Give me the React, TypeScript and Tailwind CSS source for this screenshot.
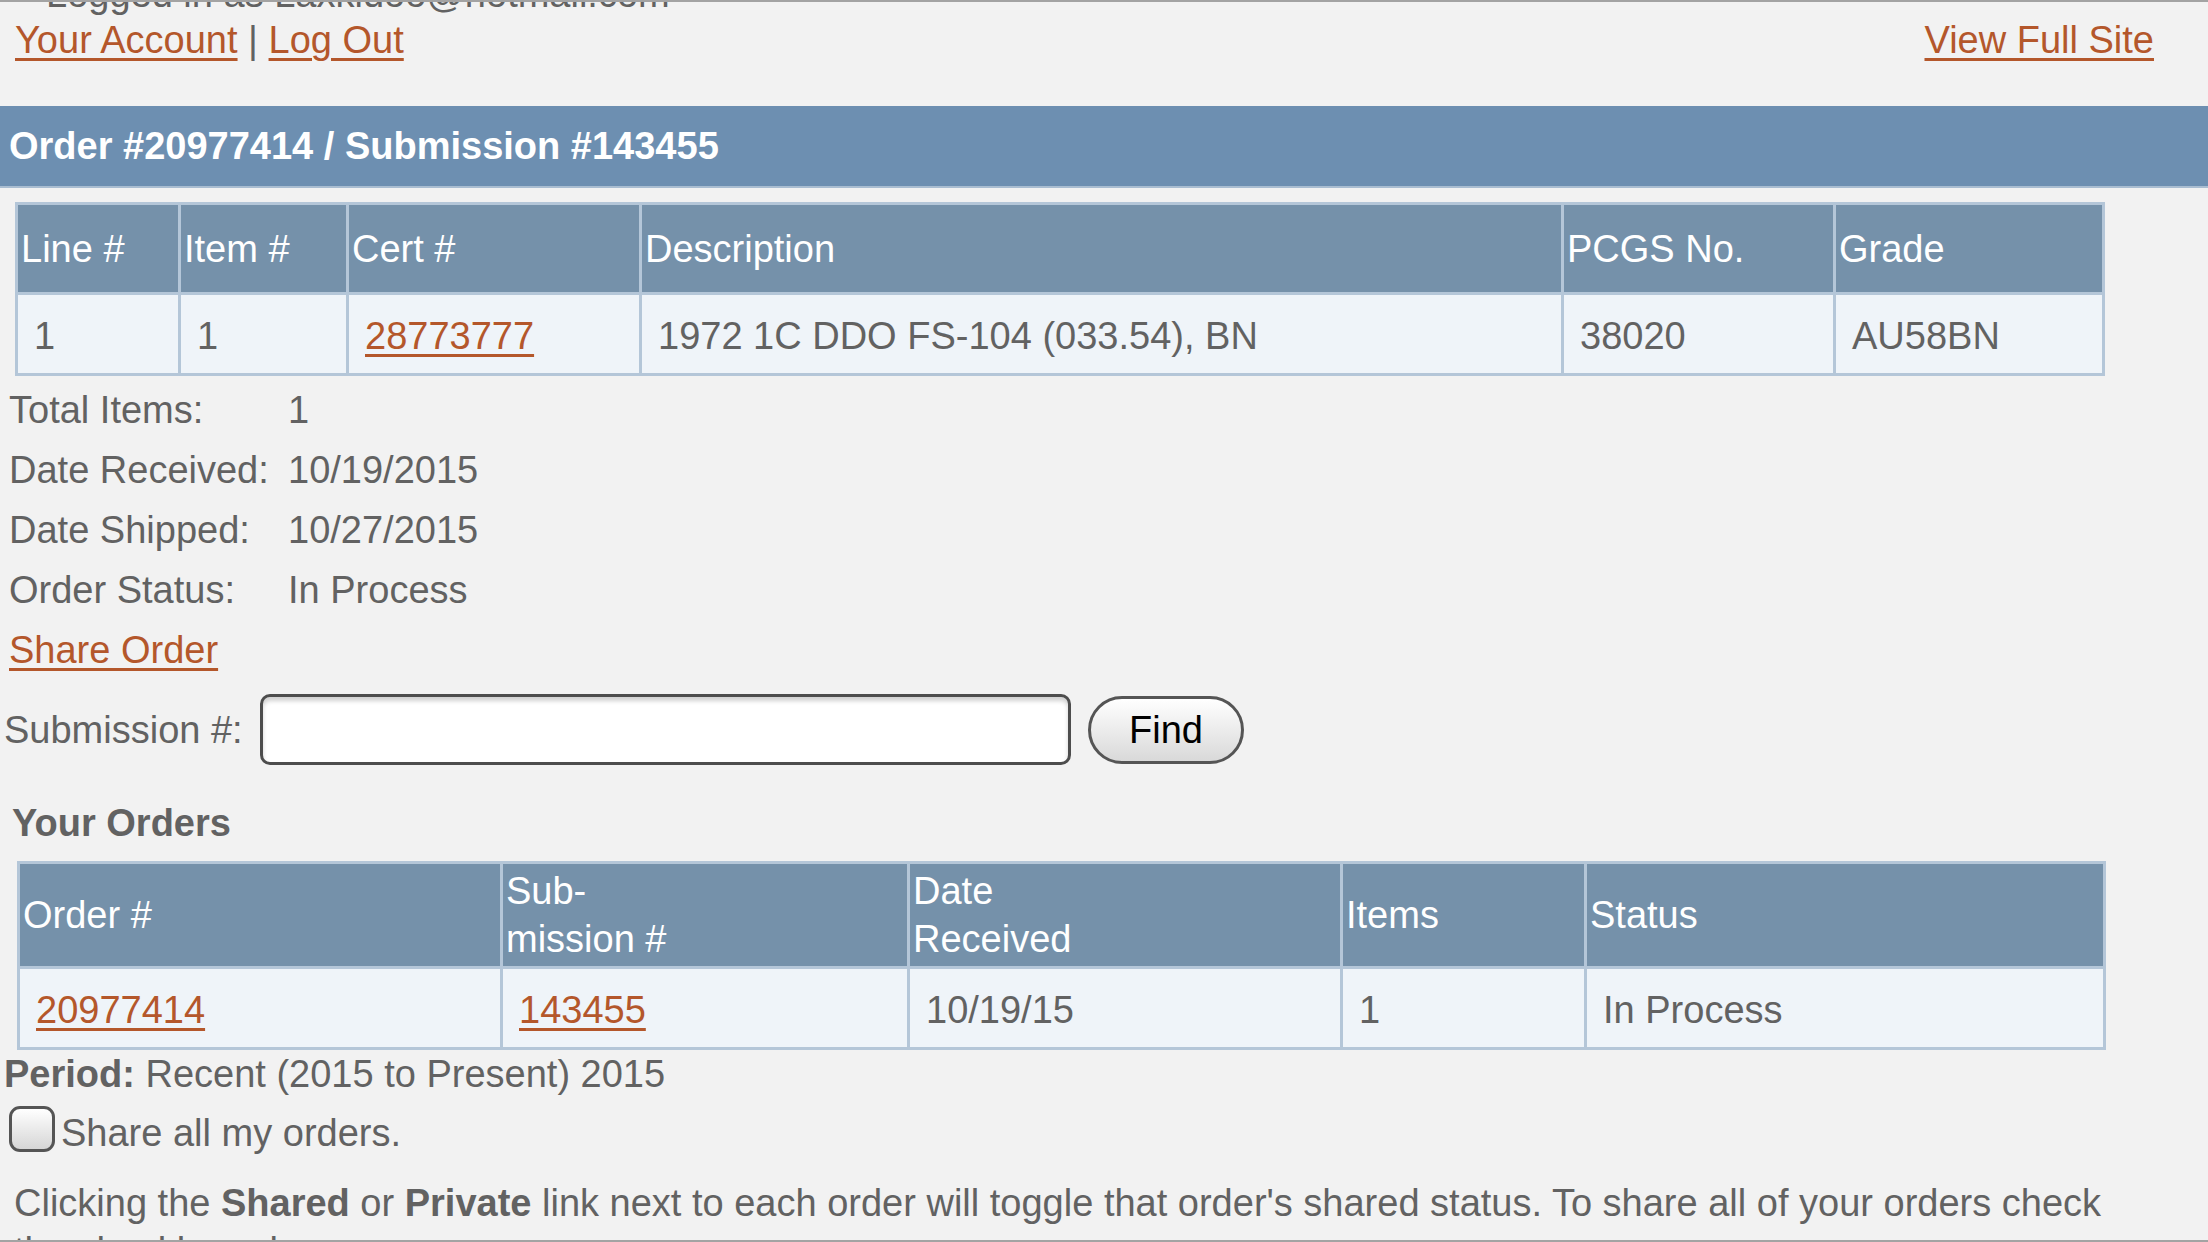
import React from 'react';

const link = 'text-[#b4572b] underline decoration-[3px] underline-offset-[5px]';

const OrderPage: React.FC = () => {
  const lines = [
    { label: 'Total Items:', value: '1' },
    { label: 'Date Received:', value: '10/19/2015' },
    { label: 'Date Shipped:', value: '10/27/2015' },
    { label: 'Order Status:', value: 'In Process' },
  ];

  return (
    <div className="relative h-[1242px] overflow-hidden bg-[#f2f2f2] text-[38px] leading-[44px] text-[#626262] font-['Liberation_Sans',Arial,sans-serif]">
      {/* top / bottom edge lines of the screenshot */}
      <div className="absolute left-0 right-0 top-0 h-[2px] bg-[#a3a3a3]" />
      <div className="absolute left-0 right-0 bottom-0 h-[2px] bg-[#a3a3a3]" />

      <div className="mt-[-28px] pl-[46px] whitespace-nowrap">Logged in as Laxkidoo@hotmail.com</div>

      <div className="mt-[2px] flex justify-between pl-[15px] pr-[54px]">
        <div>
          <a className={link} href="#">Your Account</a> | <a className={link} href="#">Log Out</a>
        </div>
        <a className={link} href="#">View Full Site</a>
      </div>

      <div className="mt-[44px] flex h-[82px] items-center border-b-2 border-[#a9bdd1] bg-[#6d8fb1] pl-[9px] font-bold text-white">
        Order #20977414 / Submission #143455
      </div>

      {/* order lines */}
      <table className="ml-[15px] mt-[14px] w-[2087px] table-fixed border-collapse border-[3px] border-[#b4c6d8]">
        <colgroup>
          <col className="w-[163px]" />
          <col className="w-[168px]" />
          <col className="w-[293px]" />
          <col className="w-[922px]" />
          <col className="w-[272px]" />
          <col className="w-[269px]" />
        </colgroup>
        <thead>
          <tr className="h-[90px] bg-[#7591aa] text-white">
            {['Line #', 'Item #', 'Cert #', 'Description', 'PCGS No.', 'Grade'].map((h) => (
              <th key={h} className="border-[3px] border-[#b4c6d8] pl-[3px] text-left font-normal">{h}</th>
            ))}
          </tr>
        </thead>
        <tbody>
          <tr className="h-[81px] bg-[#eff4f9]">
            <td className="border-[3px] border-[#b4c6d8] pl-[16px] pt-[4px]">1</td>
            <td className="border-[3px] border-[#b4c6d8] pl-[16px] pt-[4px]">1</td>
            <td className="border-[3px] border-[#b4c6d8] pl-[16px] pt-[4px]"><a className={link} href="#">28773777</a></td>
            <td className="border-[3px] border-[#b4c6d8] pl-[16px] pt-[4px]">1972 1C DDO FS-104 (033.54), BN</td>
            <td className="border-[3px] border-[#b4c6d8] pl-[16px] pt-[4px]">38020</td>
            <td className="border-[3px] border-[#b4c6d8] pl-[16px] pt-[4px]">AU58BN</td>
          </tr>
        </tbody>
      </table>

      <div className="mt-[4px] grid grid-cols-[279px_1fr] pl-[9px] leading-[60px]">
        {lines.map((l) => (
          <React.Fragment key={l.label}>
            <div>{l.label}</div>
            <div>{l.value}</div>
          </React.Fragment>
        ))}
      </div>
      <div className="pl-[9px] leading-[60px]">
        <a className={link} href="#">Share Order</a>
      </div>

      <div className="mt-[14px] flex items-center pl-[4px]">
        <span className="w-[256px]">Submission #:</span>
        <input
          type="text"
          className="h-[71px] w-[811px] rounded-[10px] border-[3px] border-[#4d4d4d] bg-white shadow-[inset_0_4px_4px_rgba(0,0,0,0.18)] outline-none"
        />
        <button className="ml-[17px] h-[68px] w-[156px] rounded-full border-[3px] border-[#555] bg-gradient-to-b from-white to-[#d9d9d9] text-[38px] text-black">
          Find
        </button>
      </div>

      <div className="mt-[36px] pl-[12px] font-bold">Your Orders</div>

      {/* your orders */}
      <table className="ml-[17px] mt-[16px] w-[2086px] table-fixed border-collapse border-[3px] border-[#b4c6d8]">
        <colgroup>
          <col className="w-[483px]" />
          <col className="w-[407px]" />
          <col className="w-[433px]" />
          <col className="w-[244px]" />
          <col className="w-[519px]" />
        </colgroup>
        <thead>
          <tr className="h-[105px] bg-[#7591aa] text-white leading-[48px]">
            <th className="border-[3px] border-[#b4c6d8] pl-[3px] text-left font-normal">Order #</th>
            <th className="border-[3px] border-[#b4c6d8] pl-[3px] text-left font-normal">Sub-<br />mission #</th>
            <th className="border-[3px] border-[#b4c6d8] pl-[3px] text-left font-normal">Date<br />Received</th>
            <th className="border-[3px] border-[#b4c6d8] pl-[3px] text-left font-normal">Items</th>
            <th className="border-[3px] border-[#b4c6d8] pl-[3px] text-left font-normal">Status</th>
          </tr>
        </thead>
        <tbody>
          <tr className="h-[81px] bg-[#eff4f9]">
            <td className="border-[3px] border-[#b4c6d8] pl-[16px] pt-[4px]"><a className={link} href="#">20977414</a></td>
            <td className="border-[3px] border-[#b4c6d8] pl-[16px] pt-[4px]"><a className={link} href="#">143455</a></td>
            <td className="border-[3px] border-[#b4c6d8] pl-[16px] pt-[4px]">10/19/15</td>
            <td className="border-[3px] border-[#b4c6d8] pl-[16px] pt-[4px]">1</td>
            <td className="border-[3px] border-[#b4c6d8] pl-[16px] pt-[4px]">In Process</td>
          </tr>
        </tbody>
      </table>

      <div className="mt-[2px] pl-[4px]">
        <span className="font-bold">Period:</span> Recent (2015 to Present) 2015
      </div>

      <label className="mt-[10px] flex items-start pl-[9px]">
        <span className="h-[46px] w-[46px] rounded-[11px] border-[3px] border-[#555] bg-gradient-to-b from-white to-[#d6d6d6]" />
        <span className="ml-[6px] mt-[5px]">Share all my orders.</span>
      </label>

      <p className="mt-[24px] pl-[14px] pr-[80px] leading-[48px]">
        Clicking the <b>Shared</b> or <b>Private</b> link next to each order will toggle that order's shared status. To
        share all of your orders check the checkbox above.
      </p>
    </div>
  );
};

export default function App() {
  return <OrderPage />;
}
